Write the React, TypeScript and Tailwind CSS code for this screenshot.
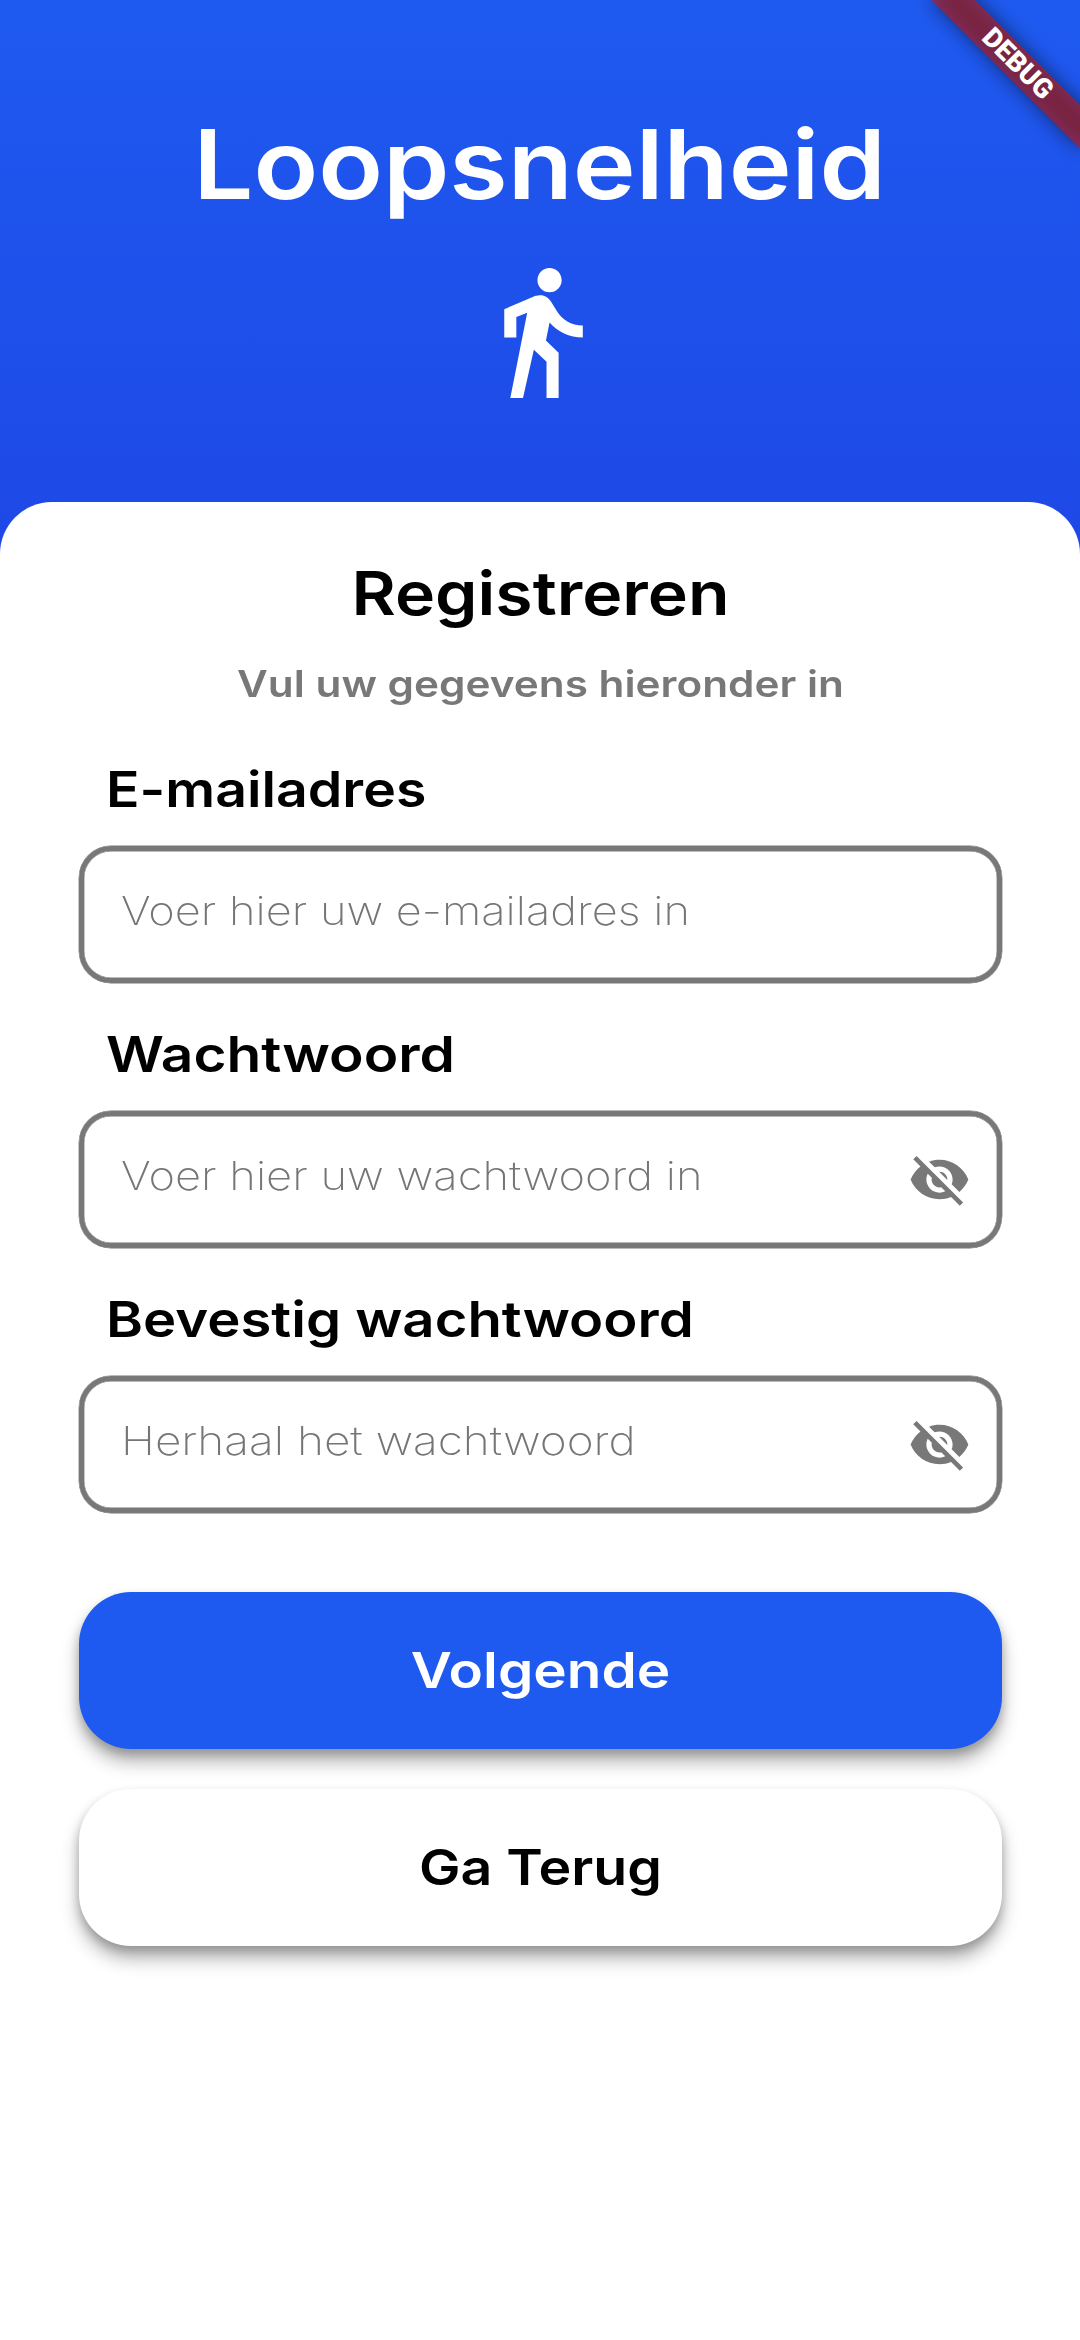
import { MdDirectionsWalk, MdVisibilityOff } from "react-icons/md";

type FieldProps = {
  label: string;
  labelScale: string;
  placeholder: string;
  placeholderScale: string;
  secret?: boolean;
};

function Field({ label, labelScale, placeholder, placeholderScale, secret }: FieldProps) {
  return (
    <div className="flex flex-col gap-[27px]">
      <div className="flex pl-[27px]">
        <label className={`origin-left whitespace-nowrap text-[49.5px] leading-[60px] font-semibold text-black ${labelScale}`}>
          {label}
        </label>
      </div>
      <div className="flex h-[137px] items-center justify-between rounded-[32px] border-[5px] border-[#787878] pr-[26px] pl-[37px] shadow-[0_0_0_0.4px_#787878,inset_0_0_0_0.4px_#787878]">
        <span className={`origin-left pb-2 text-[40px] leading-[48px] font-[200] whitespace-nowrap text-[#757575] ${placeholderScale}`}>
          {placeholder}
        </span>
        {secret && <MdVisibilityOff className="size-[63px] text-[#787878]" />}
      </div>
    </div>
  );
}

function DebugBanner() {
  return (
    <div className="absolute top-0 right-0 size-0 origin-top-left rotate-45">
      <div className="absolute top-[73.5px] left-[-105px] h-[31.5px] w-[210px] bg-black/50 blur-[10px]" />
      <div className="absolute top-[73.5px] left-[-105px] flex h-[31.5px] w-[210px] items-center justify-center bg-[#b71c1c]/63 pl-[2px] font-['Roboto'] text-[27.4px] leading-none font-black text-white">
        DEBUG
      </div>
    </div>
  );
}

const buttonShape =
  "flex h-[157px] items-center justify-center rounded-[52px] text-[49.5px] font-semibold shadow-[0_13px_18px_0_rgba(0,0,0,0.29),0_5px_10px_0_rgba(0,0,0,0.2)]";

export default function App() {
  return (
    <div className="relative flex h-[2340px] w-[1080px] flex-col overflow-hidden bg-[linear-gradient(#1e5af0_0px,#1e48e6_560px)] font-['Inter',sans-serif]">
      <header className="flex h-[502px] shrink-0 flex-col items-center pt-[104px] text-white">
        <h1 className="scale-x-[1.108] text-[96px] leading-[120px] font-semibold whitespace-nowrap">Loopsnelheid</h1>
        <MdDirectionsWalk className="mt-[35px] size-[145px]" />
      </header>

      <main className="flex grow flex-col rounded-t-[52px] bg-white pt-[51px] pr-[78px] pl-[79px]">
        <h2 className="scale-x-[1.123] text-center text-[60.5px] leading-[80px] font-semibold text-black">Registreren</h2>
        <p className="mt-[26px] scale-x-[1.1435] text-center text-[37px] leading-[50px] font-semibold text-[#787878]">
          Vul uw gegevens hieronder in
        </p>

        <form className="mt-[50px] flex flex-col gap-[41px]">
          <Field
            label="E-mailadres"
            labelScale="scale-x-[1.119]"
            placeholder="Voer hier uw e-mailadres in"
            placeholderScale="scale-x-[1.130]"
          />
          <Field
            label="Wachtwoord"
            labelScale="scale-x-[1.147]"
            placeholder="Voer hier uw wachtwoord in"
            placeholderScale="scale-x-[1.133]"
            secret
          />
          <Field
            label="Bevestig wachtwoord"
            labelScale="scale-x-[1.136]"
            placeholder="Herhaal het wachtwoord"
            placeholderScale="scale-x-[1.149]"
            secret
          />
        </form>

        <div className="mt-[79px] flex flex-col gap-10">
          <button type="button" className={`${buttonShape} bg-[#1e5af0] text-white`}>
            <span className="scale-x-[1.144]">Volgende</span>
          </button>
          <button type="button" className={`${buttonShape} bg-white text-black`}>
            <span className="scale-x-[1.12]">Ga Terug</span>
          </button>
        </div>
      </main>

      <DebugBanner />
    </div>
  );
}
